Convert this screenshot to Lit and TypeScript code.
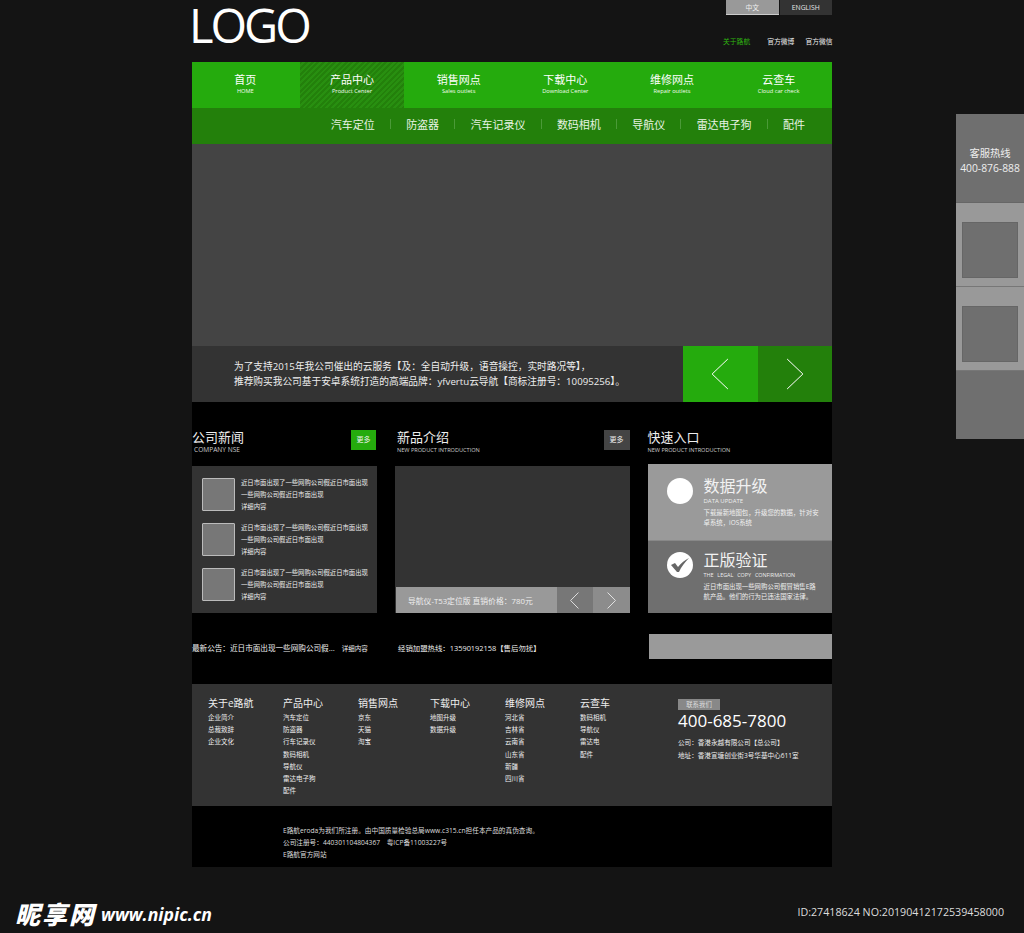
import { LitElement, html, css, svg } from "lit";
import { customElement } from "lit/decorators.js";

const NAV = [
  ["首页", "HOME"],
  ["产品中心", "Product Center"],
  ["销售网点", "Sales outlets"],
  ["下载中心", "Download Center"],
  ["维修网点", "Repair outlets"],
  ["云查车", "Cloud car check"],
];
const SUB = ["汽车定位", "防盗器", "汽车记录仪", "数码相机", "导航仪", "雷达电子狗", "配件"];
const FOOT: [string, string[]][] = [
  ["关于e路航", ["企业简介", "总裁致辞", "企业文化"]],
  ["产品中心", ["汽车定位", "防盗器", "行车记录仪", "数码相机", "导航仪", "雷达电子狗", "配件"]],
  ["销售网点", ["京东", "天猫", "淘宝"]],
  ["下载中心", ["地图升级", "数据升级"]],
  ["维修网点", ["河北省", "吉林省", "云南省", "山东省", "新疆", "四川省"]],
  ["云查车", ["数码相机", "导航仪", "雷达电", "配件"]],
];

const chevron = (dir: "l" | "r", w: number, h: number) => html`<svg width=${w} height=${h} viewBox="0 0 16 32" preserveAspectRatio="none" fill="none" stroke="#fff" stroke-width="1">
  ${svg`<path d=${dir === "l" ? "M15 1 L1 16 L15 31" : "M1 1 L15 16 L1 31"} vector-effect="non-scaling-stroke"></path>`}
</svg>`;

@customElement("app-root")
export class AppRoot extends LitElement {
  static styles = css`
    :host { display: block; position: relative; width: 1024px; height: 933px; overflow: hidden; background: #141414;
      font-family: "Open Sans", "Noto Sans CJK SC", sans-serif; color: #eee; }
    .page { width: 640px; margin-left: 192px; }
    .head { height: 62px; display: flex; justify-content: space-between; }
    .logo { font-size: 47px; line-height: 50px; color: #fff; margin: 0 0 0 -3px; padding-left: 0; letter-spacing: -3px; height: 62px; }
    .head-r { width: 109px; display: flex; flex-direction: column; }
    .lang { display: flex; height: 15px; font-size: 6.8px; line-height: 15px; text-align: center; gap: 1px; margin-left: 3px;}
    .lang span { flex: 1; background: #333; color: #e6e6e6; }
    .lang .on { background: #999; color: #eee; border-bottom: 1px solid #ccc; box-sizing: border-box; }
    .tl { display: flex; font-size: 6.8px; line-height: 10px; margin-top: 22px; color: #eee; white-space: nowrap; }
    .tl span { margin-right: 17px; }
    .tl span + span { margin-right: 11px; }
    .tl .g { color: #2fb510; }
    .nav { display: grid; grid-template-columns: repeat(6, 1fr); height: 46px; background: #25ab0d; }
    .nav div { display: flex; flex-direction: column; align-items: center; padding-top: 11px; box-sizing: border-box; color: #fff; }
    .nav b { font-weight: 400; font-size: 11px; line-height: 14px; }
    .nav i { font-style: normal; font-size: 5.7px; line-height: 9px; color: #f4fbf0; }
    .nav .on { margin: 0 1px 0 1px; background: repeating-linear-gradient(135deg, #23800b 0 2px, #288f10 2px 4px); }
    .sub { height: 36px; background: #23800b; display: flex; justify-content: flex-end; align-items: center; padding: 0 27px 4px 0; box-sizing: border-box; font-size: 11px; color: #e8f3e4; }
    .sub .sep { width: 1px; height: 10px; background: #4b9a38; margin: 0 15.2px; }
    .hero { height: 202px; background: #444; }
    .notice { height: 56px; background: #333; display: flex; }
    .notice p { flex: 1; margin: 0; padding: 14px 0 0 42px; font-size: 9.7px; line-height: 14.5px; color: #eee; white-space: nowrap; }
    .arr { width: 74.5px; display: flex; align-items: center; justify-content: center; }
    .arr.a { background: #25ab0d; }
    .arr.b { background: #23800b; }
    .main { height: 282px; background: #000; display: grid; grid-template-columns: 185px 234.5px 184.5px; column-gap: 18px; grid-template-rows: 64px 147px 71px; }
    .ch { display: flex; justify-content: space-between; padding-top: 27px; box-sizing: border-box; }
    .ch h3 { margin: 0; font-weight: 400; font-size: 13px; line-height: 17px; color: #eee; }
    .ch small { display: block; font-size: 5.6px; line-height: 8px; margin-top: 0; color: #ccc; white-space: nowrap; }
    .ch small.c { font-size: 6.6px; padding-left: 2px; }
    .ch.ind { padding-left: 2px; }
    .more { width: 26px; height: 20px; margin-top: 1px; font-size: 7px; line-height: 20px; text-align: center; background: #444; color: #eee; }
    .more.g { width: 25px; margin-right: 1px; background: #25ab0d; }
    .news { background: #333; padding: 11px 0 0 10px; box-sizing: border-box; display: flex; flex-direction: column; gap: 9px; }
    .ni { display: flex; gap: 6px; font-size: 6.35px; line-height: 12px; color: #eee; height: 36px; }
    .thumb { width: 33px; height: 33px; margin-top: 1px; background: #777; border: 1px solid #bbb; box-sizing: border-box; border-radius: 1px; flex: none; }
    .ni p { margin: 0; width: 130px; }
    .prod { background: #333; display: flex; flex-direction: column; justify-content: flex-end; }
    .bar { height: 26px; background: #999; display: flex; align-items: center; margin-left: 1px; }
    .bar span { flex: 1; padding-left: 12px; font-size: 7.8px; color: #eee; }
    .bar div { width: 36.5px; height: 26px; display: flex; align-items: center; justify-content: center; background: #777; }
    .bar div + div { background: #8c8c8c; }
    .bar svg { opacity: .75; }
    .quick { display: flex; flex-direction: column; margin-top: -2px; }
    .q { height: 76px; background: #9a9a9a; display: flex; padding: 12px 0 0 19px; box-sizing: border-box; gap: 11px; }
    .q + .q { height: 73px; background: #6f6f6f; border-top: 1px solid #888; padding-top: 9px; }
    .circle { width: 26px; height: 26px; background: #fff; border-radius: 50%; flex: none; margin-top: 2px; display: flex; align-items: center; justify-content: center; }
    .q h4 { margin: 0; font-weight: 400; font-size: 16px; line-height: 20px; color: #f2f2f2; }
    .q small { display: block; font-size: 6px; line-height: 8px; margin-top: 1px; color: #eee; white-space: nowrap; }
    .q small.w { font-size: 5.4px; word-spacing: 2.5px; }
    .q p { margin: 3px 0 0; font-size: 6.4px; line-height: 10px; color: #f0f0f0; width: 118px; }
    .ln { font-size: 7.6px; color: #eee; padding-top: 29px; white-space: nowrap; line-height: 12px; }
    .ln em { font-style: normal; font-size: 6.5px; margin-left: 7px; }
    .ln.t { padding-left: 3px; font-size: 7.4px; }
    .gbar { height: 25px; margin: 21px 0 0 1px; background: #9a9a9a; }
    .foot { height: 122px; background: #333; padding: 13px 0 0 16px; box-sizing: border-box; display: grid; grid-template-columns: 75px 75px 72px 75px 75px 98px 1fr; }
    .foot h5 { margin: 0 0 2px; font-weight: 400; font-size: 10px; line-height: 13px; color: #eee; white-space: nowrap; }
    .foot a { display: block; font-size: 6.5px; line-height: 12.2px; color: #eee; white-space: nowrap; }
    .tag { display: block; width: 42px; height: 11px; line-height: 11px; text-align: center; background: #888; color: #ddd; font-size: 6.4px; margin-top: 2px; }
    .tel { font-size: 17px; line-height: 24px; color: #fff; margin-top: -1px; white-space: nowrap; }
    .addr { font-size: 6.6px; line-height: 12.5px; margin-top: 4px; color: #eee; white-space: nowrap; }
    .copy { height: 61px; background: #000; padding: 19px 0 0 91px; box-sizing: border-box; font-size: 6.66px; line-height: 12px; color: #ddd; }
    .wm { margin: 32px 20px 0 15px; display: flex; justify-content: space-between; align-items: flex-start; }
    .wm b { display: flex; align-items: center; font-size: 25px; font-weight: 900; font-style: italic; line-height: 30px; color: #fff; letter-spacing: 2px; }
    .wm b span { font-size: 17.6px; font-family: "Open Sans", sans-serif; font-weight: 700; letter-spacing: 0; margin-left: 5px; }
    .wm u { text-decoration: none; font-size: 10.7px; line-height: 26px; color: #ddd; }
    .rail { position: absolute; left: 956px; top: 114px; width: 68px; height: 325px; display: flex; flex-direction: column; background: #6f6f6f; }
    .rt { height: 89px; padding-top: 32px; box-sizing: border-box; text-align: center; font-size: 10.3px; line-height: 15px; color: #eee; border-bottom: 1px solid #666; white-space: nowrap; }
    .rb { height: 84px; background: #999; border-bottom: 1px solid #777; box-sizing: border-box; padding: 19px 6px 0; }
    .rb div { height: 56px; background: #6f6f6f; border: 1px solid #666; box-sizing: border-box; }
  `;

  render() {
    return html`
      <div class="page">
        <header class="head">
          <div class="logo">LOGO</div>
          <div class="head-r">
            <div class="lang"><span class="on">中文</span><span>ENGLISH</span></div>
            <div class="tl"><span class="g">关于路航</span><span>官方微博</span><span>官方微信</span></div>
          </div>
        </header>
        <nav class="nav">
          ${NAV.map((n, i) => html`<div class=${i === 1 ? "on" : ""}><b>${n[0]}</b><i>${n[1]}</i></div>`)}
        </nav>
        <div class="sub">
          ${SUB.map((s, i) => html`${i ? html`<span class="sep"></span>` : ""}<span>${s}</span>`)}
        </div>
        <div class="hero"></div>
        <div class="notice">
          <p>为了支持2015年我公司催出的云服务【及：全自动升级，语音操控，实时路况等】，<br />推荐购买我公司基于安卓系统打造的高端品牌：yfvertu云导航【商标注册号：10095256】。</p>
          <div class="arr a">${chevron("l", 18, 32)}</div>
          <div class="arr b">${chevron("r", 18, 32)}</div>
        </div>
        <section class="main">
          <div class="ch"><h3>公司新闻<small class="c">COMPANY NSE</small></h3><span class="more g">更多</span></div>
          <div class="ch ind"><h3>新品介绍<small>NEW PRODUCT INTRODUCTION</small></h3><span class="more">更多</span></div>
          <div class="ch"><h3>快速入口<small>NEW PRODUCT INTRODUCTION</small></h3></div>
          <div class="news">
            ${[0, 1, 2].map(() => html`<div class="ni"><div class="thumb"></div><p>近日市面出现了一些网购公司假近日市面出现一些网购公司假近日市面出现<br />详细内容</p></div>`)}
          </div>
          <div class="prod">
            <div class="bar"><span>导航仪-T53定位版 直销价格：780元</span>
              <div>${chevron("l", 9, 17)}</div><div>${chevron("r", 9, 17)}</div></div>
          </div>
          <div class="quick">
            <div class="q"><div class="circle"></div><div><h4>数据升级</h4><small>DATA UPDATE</small><p>下载最新地图包，升级您的数据，针对安卓系统，iOS系统</p></div></div>
            <div class="q"><div class="circle"><svg width="20" height="16" viewBox="0 0 20 16"><path d="M1 8 L5 6 L8 10 C11 6 15 3 19 1 C15 5 11 10 9 15 L7 15 Z" fill="#666"></path></svg></div><div><h4>正版验证</h4><small class="w">THE LEGAL COPY CONFIRMATION</small><p>近日市面出现一些网购公司假冒销售E路航产品。他们的行为已违法国家法律。</p></div></div>
          </div>
          <div class="ln">最新公告：近日市面出现一些网购公司假...<em>详细内容</em></div>
          <div class="ln t">经销加盟热线：13590192158【售后勿扰】</div>
          <div class="gbar"></div>
        </section>
        <footer class="foot">
          ${FOOT.map(([t, ls]) => html`<div><h5>${t}</h5>${ls.map((l) => html`<a>${l}</a>`)}</div>`)}
          <div>
            <span class="tag">联系我们</span>
            <div class="tel">400-685-7800</div>
            <div class="addr">公司：香港永越有限公司【总公司】<br />地址：香港宣塘创业街3号华基中心611室</div>
          </div>
        </footer>
        <div class="copy">E路航eroda为我们所注册。由中国质量检验总局www.c315.cn担任本产品的真伪查询。<br />公司注册号：440301104804367　粤ICP备11003227号<br />E路航官方网站</div>
      </div>
      <div class="wm"><b>昵享网<span>www.nipic.cn</span></b><u>ID:27418624 NO:20190412172539458000</u></div>
      <aside class="rail">
        <div class="rt">客服热线<br />400-876-888</div>
        <div class="rb"><div></div></div>
        <div class="rb"><div></div></div>
      </aside>
    `;
  }
}
